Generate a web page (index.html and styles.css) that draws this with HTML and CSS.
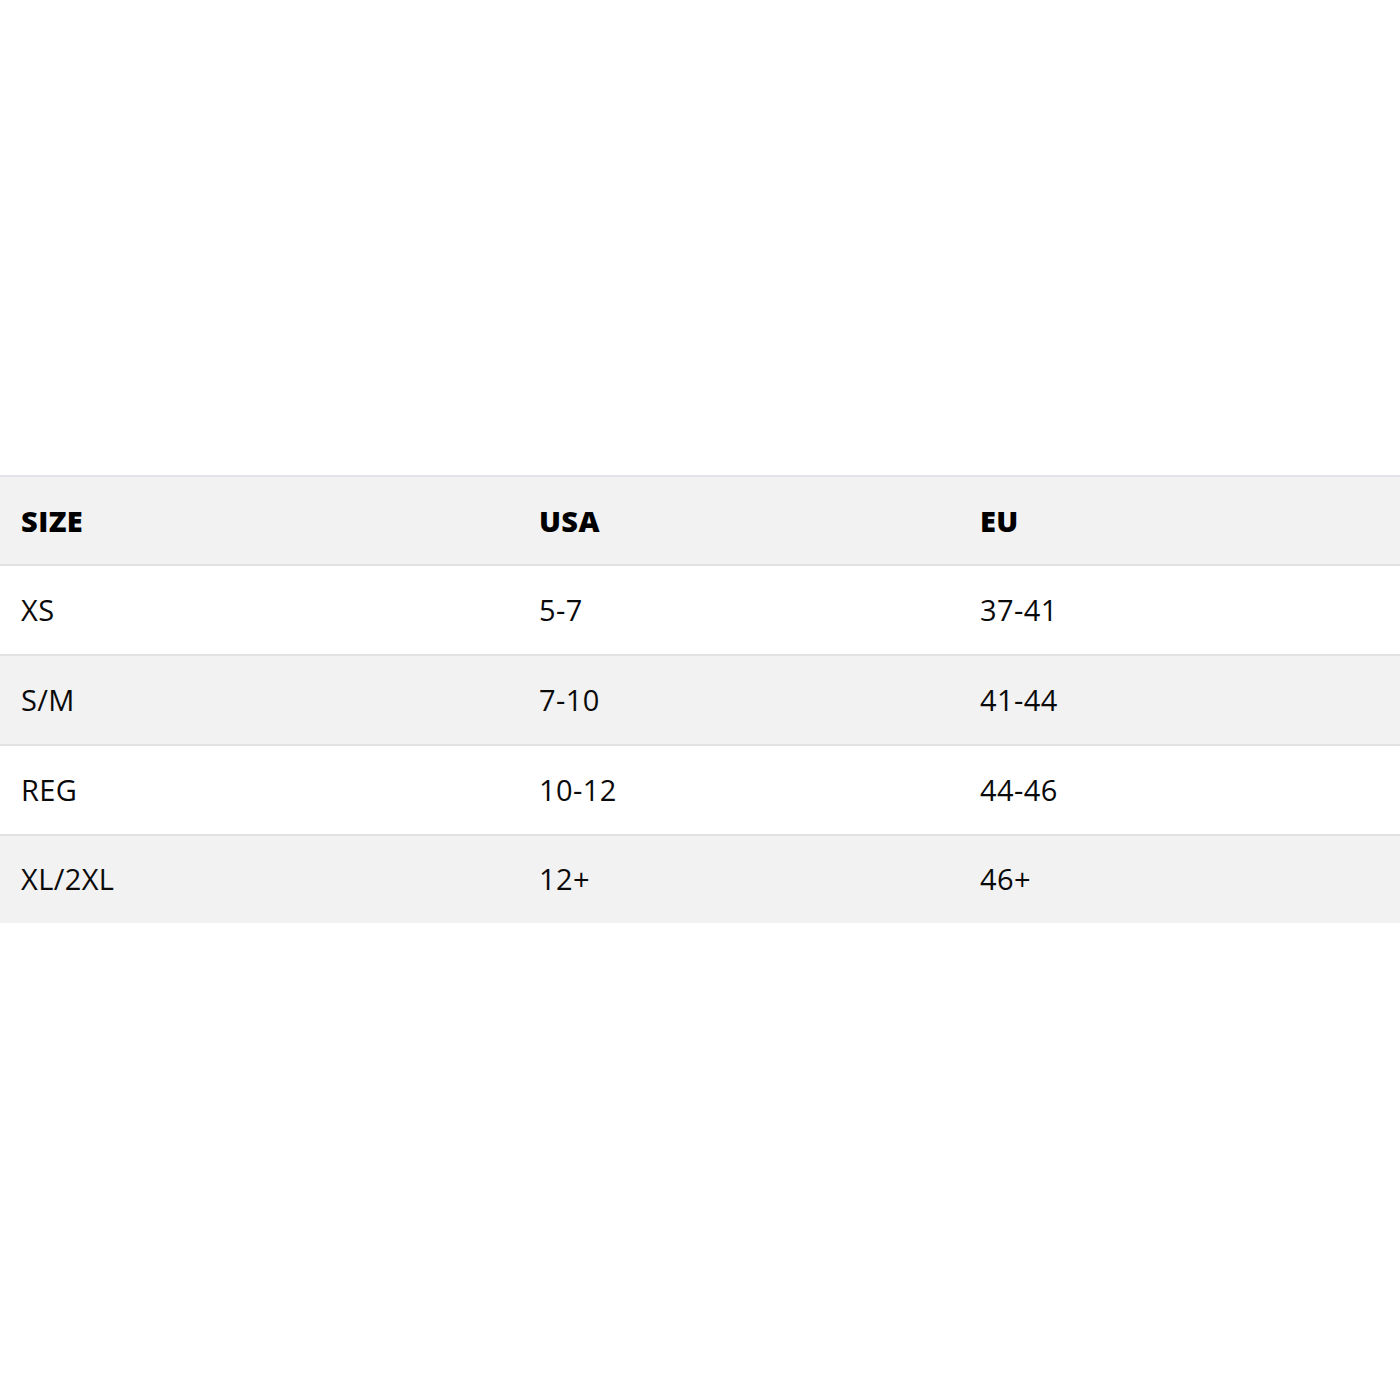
FILE: index.html
```html
<!DOCTYPE html>
<html>
<head>
<meta charset="utf-8">
<link rel="stylesheet" href="styles.css">
</head>
<body>
<main class="page">
<table class="sizes">
<thead>
<tr><th class="c1">SIZE</th><th class="c2">USA</th><th class="c3">EU</th></tr>
</thead>
<tbody>
<tr><td>XS</td><td>5-7</td><td>37-41</td></tr>
<tr><td>S/M</td><td>7-10</td><td>41-44</td></tr>
<tr><td>REG</td><td>10-12</td><td>44-46</td></tr>
<tr><td>XL/2XL</td><td>12+</td><td>46+</td></tr>
</tbody>
</table>
</main>
</body>
</html>
```
FILE: styles.css
```css
html, body { margin: 0; padding: 0; background: #fff; }
.page { padding-top: 475px; height: 925px; }
.sizes {
  width: 1400px;
  border-collapse: collapse;
  table-layout: fixed;
  font-family: "Open Sans", "Noto Sans", sans-serif;
  font-size: 29px;
  letter-spacing: 0.4px;
  color: #0a0a0a;
  border-top: 2px solid #e3e4ee;
}
.sizes th, .sizes td {
  text-align: left;
  padding: 0 0 0 21px;
  height: 90px;
  box-sizing: border-box;
  border-bottom: 2px solid #e2e2e2;
  vertical-align: middle;
}
.sizes th { font-weight: 800; background: #f2f2f2; height: 89px; color: #000; }
.sizes td { font-weight: 400; padding-bottom: 2px; }
.sizes tbody tr:nth-child(even) td { background: #f2f2f2; }
.sizes tbody tr:last-child td { border-bottom: none; height: 88px; }
.c1 { width: 518px; }
.c2 { width: 441px; }
```
